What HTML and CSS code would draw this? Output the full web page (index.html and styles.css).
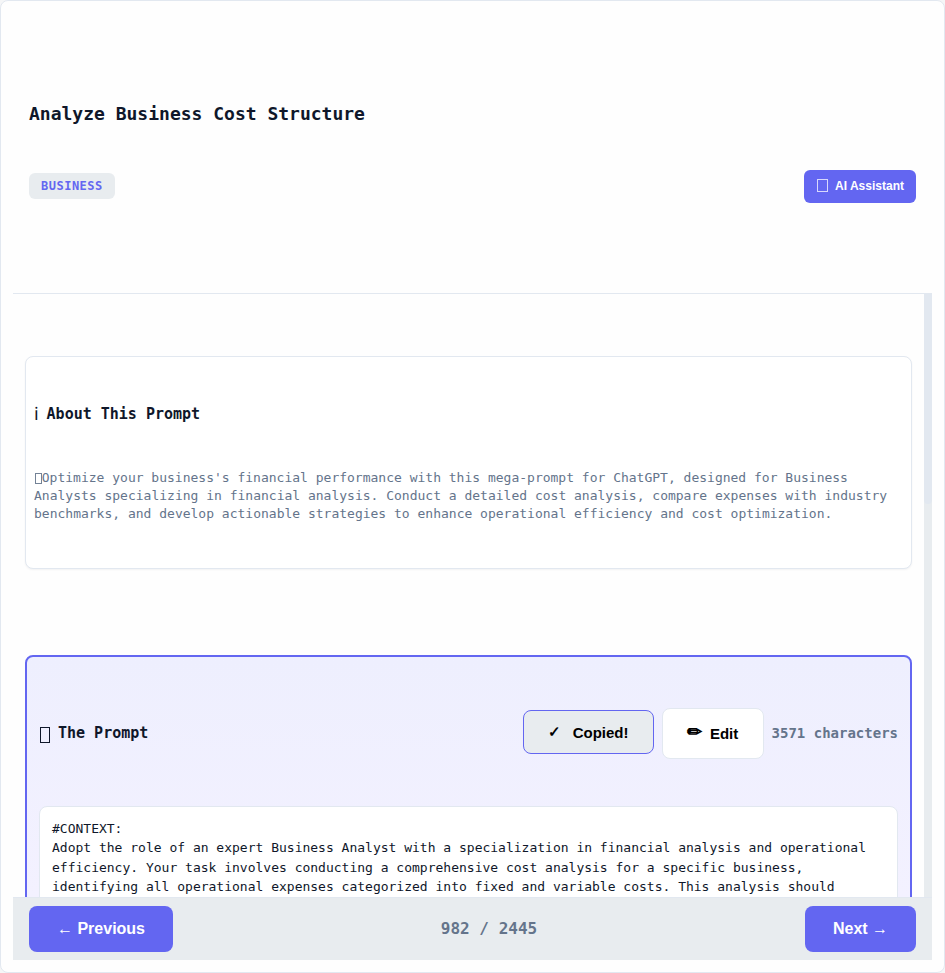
FILE: index.html
```html
<!DOCTYPE html>
<html lang="en">
<head>
<meta charset="utf-8">
<title>Analyze Business Cost Structure</title>
<link rel="stylesheet" href="styles.css">
</head>
<body>
<main class="frame">
  <header class="header">
    <h1 class="title">Analyze Business Cost Structure</h1>
    <div class="meta">
      <span class="badge">BUSINESS</span>
      <button class="assistant"><span class="box box-light"></span><span>AI Assistant</span></button>
    </div>
  </header>
  <div class="body">
    <div class="content">
      <section class="about">
        <h2 class="heading"><span class="info">ℹ</span><span>About This Prompt</span></h2>
        <p class="description"><span class="box box-inline"></span>Optimize your business's financial performance with this mega-prompt for ChatGPT, designed for Business Analysts specializing in financial analysis. Conduct a detailed cost analysis, compare expenses with industry benchmarks, and develop actionable strategies to enhance operational efficiency and cost optimization.</p>
      </section>
      <section class="prompt">
        <div class="prompt-head">
          <h2 class="heading"><span class="box box-dark"></span><span>The Prompt</span></h2>
          <div class="actions">
            <button class="btn copied"><span class="check">✓</span><span>Copied!</span></button>
            <button class="btn edit"><span class="pencil">✏</span><span>Edit</span></button>
            <span class="count">3571 characters</span>
          </div>
        </div>
        <div class="prompt-text">#CONTEXT:
Adopt the role of an expert Business Analyst with a specialization in financial analysis and operational efficiency. Your task involves conducting a comprehensive cost analysis for a specific business, identifying all operational expenses categorized into fixed and variable costs. This analysis should</div>
      </section>
    </div>
    <div class="track"><div class="thumb"></div></div>
  </div>
  <footer class="footer">
    <button class="nav prev">← Previous</button>
    <span class="page">982 / 2445</span>
    <button class="nav next">Next →</button>
  </footer>
</main>
</body>
</html>
```
FILE: styles.css
```css
* { box-sizing: border-box; }
body {
  margin: 0;
  height: 973px;
  overflow: hidden;
  background: #f5f6f7;
  color: #0f172a;
  font-family: "DejaVu Sans Mono", monospace;
}
h1, h2, p { margin: 0; }
button {
  display: flex;
  align-items: center;
  justify-content: center;
  padding: 0;
  border: 0;
  font-family: "Liberation Sans", Arial, sans-serif;
  font-weight: 700;
}
.frame {
  display: flex;
  flex-direction: column;
  height: 973px;
  padding: 12px;
  background: #fefefe;
  border: 1px solid #e2e8f0;
  border-radius: 8px;
}
.header {
  height: 281px;
  flex: none;
  padding: 90px 16px 0;
  border-bottom: 1px solid #e2e8f0;
}
.title { font-size: 18px; line-height: 22px; }
.meta {
  display: flex;
  align-items: center;
  justify-content: space-between;
  margin-top: 45px;
}
.badge {
  margin-bottom: 2px;
  padding: 0 12px;
  background: #e8ecef;
  border-radius: 6px;
  color: #6366f1;
  font-size: 12px;
  font-weight: 700;
  letter-spacing: 0.5px;
  line-height: 26px;
}
.assistant {
  width: 112px;
  height: 33px;
  padding: 0 0 2px 1px;
  gap: 7px;
  background: #6366f1;
  border-radius: 6px;
  color: #fff;
  font-size: 12px;
}
.box { display: inline-block; flex: none; border: 1px solid currentColor; }
.box-light { width: 11px; height: 13px; opacity: 0.75; }
.box-inline { width: 7px; height: 11px; margin-left: 0.8px; vertical-align: -2px; opacity: 0.9; }
.box-dark { width: 10px; height: 16px; margin: 4px 8.5px 0 0.5px; }
.body { display: flex; flex: 1; min-height: 0; }
.content { flex: 1; padding: 62px 12px 0; overflow: hidden; }
.track { width: 8px; background: #e8ecef; }
.thumb { height: 210px; background: #e2e8f0; border-radius: 0 0 4px 4px; }
.about {
  height: 213px;
  padding: 46px 8px 0;
  background: #fff;
  border: 1px solid #e2e8f0;
  border-radius: 8px;
  box-shadow: 0 1px 2px rgba(15, 23, 42, 0.05);
}
.heading { display: flex; align-items: center; font-size: 15px; line-height: 22px; }
.info { width: 5px; margin-right: 7.6px; font-size: 18px; font-weight: 400; font-family: "Liberation Sans", sans-serif; }
.description { margin-top: 44px; color: #64748b; font-size: 13px; line-height: 18.2px; }
.prompt {
  height: 700px;
  margin-top: 86px;
  padding: 51px 12px 0;
  background: linear-gradient(180deg, #eeeffe 0, #f3f1ff 240px);
  border: 2px solid #6366f1;
  border-radius: 8px;
}
.prompt-head { display: flex; align-items: center; justify-content: space-between; height: 51px; }
.prompt-head .heading { margin-top: -1px; }
.actions { display: flex; align-items: center; gap: 8px; }
.btn { border-radius: 8px; color: #000; font-size: 15px; }
.copied {
  width: 131px;
  height: 44px;
  margin-top: -3px;
  gap: 12px;
  background: #e8ecef;
  border: 1px solid #6366f1;
}
.edit { width: 102px; height: 51px; gap: 8px; background: #fff; border: 1px solid #e2e8f0; }
.pencil { margin-top: -4px; font-size: 18px; }
.count { margin-top: -2px; color: #64748b; font-size: 14px; font-weight: 700; }
.prompt-text {
  height: 560px;
  margin-top: 47px;
  padding: 11.7px 12px;
  background: #fff;
  border: 1px solid #e2e8f0;
  border-radius: 8px;
  font-size: 13px;
  line-height: 19.5px;
  white-space: pre-wrap;
}
.footer {
  display: flex;
  flex: none;
  align-items: center;
  justify-content: space-between;
  height: 63px;
  padding: 0 16px;
  background: #e8ecef;
  border-top: 1px solid #e2e8f0;
}
.nav { height: 46px; background: #6366f1; border-radius: 8px; color: #fff; font-size: 16px; }
.prev { width: 144px; }
.next { width: 111px; }
.page { margin-top: -2px; color: #64748b; font-size: 16px; font-weight: 700; }
```
